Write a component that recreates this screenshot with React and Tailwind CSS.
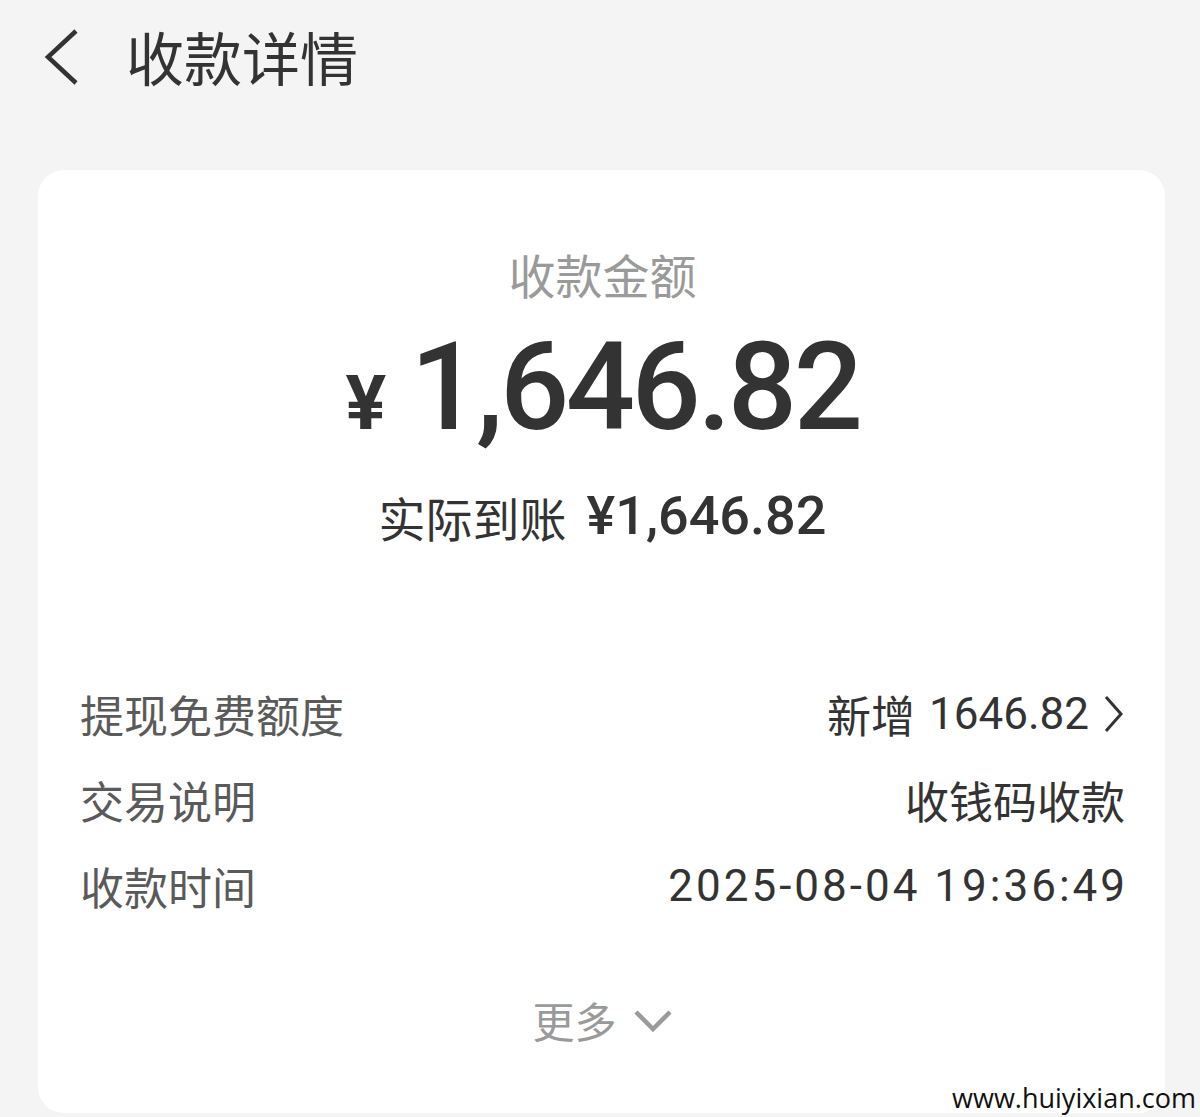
import React from "react";

const CJK = { fontFamily: '"Noto Sans CJK SC", "Noto Sans", sans-serif' };
const NUM = { fontFamily: 'Roboto, "Noto Sans CJK SC", sans-serif' };

function Row({ label, children }) {
  return (
    <div className="flex items-center justify-between h-[86px]">
      <span className="text-[44px] text-[#5a5a5a] leading-none">{label}</span>
      <div className="flex items-center text-[44px] text-[#333] leading-none">{children}</div>
    </div>
  );
}

export default function App() {
  return (
    <div className="relative w-[1200px] h-[1117px] bg-[#f4f4f4] overflow-hidden" style={CJK}>
      <div className="flex items-center h-[112px] pl-[42px]">
        <svg width="40" height="58" viewBox="0 0 40 58" className="shrink-0">
          <path d="M34 4 L6 30 L34 56" fill="none" stroke="#333" strokeWidth="4.5" strokeLinecap="butt" strokeLinejoin="miter" />
        </svg>
        <h1 className="ml-[44px] text-[58px] text-[#333] leading-none font-normal">收款详情</h1>
      </div>

      <div className="ml-[38px] mt-[58px] w-[1127px] h-[943px] bg-white rounded-[26px] pl-[42px] pr-[40px] flex flex-col">
        <div className="pt-[80px] flex flex-col items-center">
          <div className="text-[47px] text-[#9a9a9a] leading-none">收款金额</div>
          <div className="mt-[30px] flex items-baseline text-[#333]" style={NUM}>
            <span className="text-[76px] font-bold leading-none mr-[24px]">¥</span>
            <span className="text-[122px] font-medium leading-none tracking-[-3.5px]">1,646.82</span>
          </div>
          <div className="mt-[40px] flex items-center text-[#333] leading-none">
            <span className="text-[47px]">实际到账</span>
            <span className="ml-[20px] text-[54px] font-medium" style={NUM}>¥1,646.82</span>
          </div>
        </div>

        <div className="mt-[128px] flex flex-col">
          <Row label="提现免费额度">
            <span>新增</span>
            <span className="ml-[14px]" style={NUM}>1646.82</span>
            <svg width="24" height="40" viewBox="0 0 24 40" className="ml-[12px]">
              <path d="M5 3 L20 20 L5 37" fill="none" stroke="#333" strokeWidth="3" />
            </svg>
          </Row>
          <Row label="交易说明">
            <span>收钱码收款</span>
          </Row>
          <Row label="收款时间">
            <span style={NUM} className="tracking-[3px] mr-[-3px]">2025-08-04 19:36:49</span>
          </Row>
        </div>

        <div className="mt-[70px] flex items-center justify-center">
          <span className="text-[42px] text-[#9a9a9a] leading-none">更多</span>
          <svg width="40" height="24" viewBox="0 0 40 24" className="ml-[16px]">
            <path d="M3 4 L20 21 L37 4" fill="none" stroke="#9a9a9a" strokeWidth="4.5" />
          </svg>
        </div>
      </div>

      <div
        className="absolute right-[4px] bottom-[6px] text-[27px] text-[#111] leading-none"
        style={{ fontFamily: '"Open Sans", "Liberation Sans", sans-serif' }}
      >
        www.huiyixian.com
      </div>
    </div>
  );
}
